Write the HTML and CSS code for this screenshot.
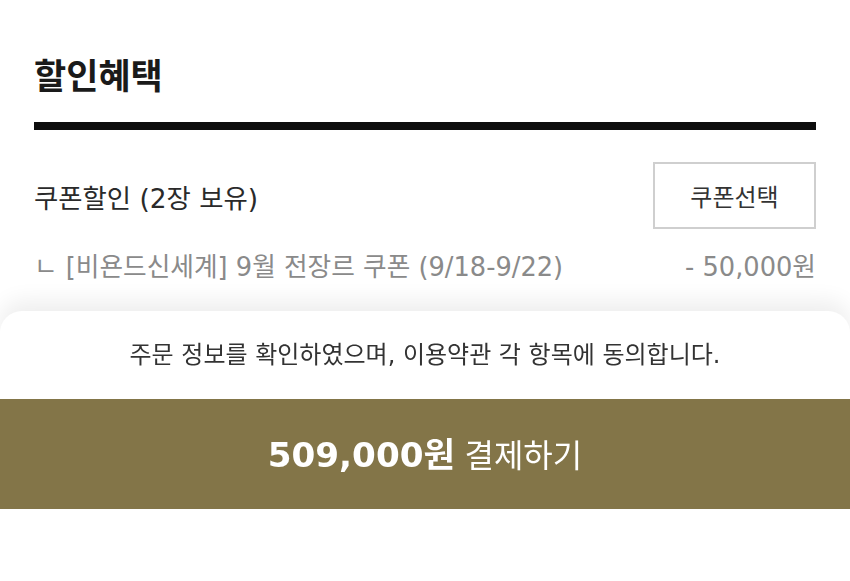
FILE: index.html
```html
<!DOCTYPE html>
<html lang="ko">
<head>
<meta charset="utf-8">
<link rel="stylesheet" href="styles.css">
</head>
<body>
<main class="page">
  <h2 class="title">할인혜택</h2>
  <div class="rule"></div>
  <div class="coupon-row">
    <span class="coupon-label">쿠폰할인 (2장 보유)</span>
    <button class="coupon-btn">쿠폰선택</button>
  </div>
  <div class="coupon-detail">
    <span>ㄴ [비욘드신세계] 9월 전장르 쿠폰 (9/18-9/22)</span>
    <span>- 50,000원</span>
  </div>
</main>
<section class="sheet">
  <p class="agree">주문 정보를 확인하였으며, 이용약관 각 항목에 동의합니다.</p>
  <button class="pay-btn"><strong class="pay-amount">509,000원</strong> <span class="pay-label">결제하기</span></button>
</section>
</body>
</html>
```
FILE: styles.css
```css
html, body {
  margin: 0;
  padding: 0;
  background: #fff;
}
body {
  font-family: "DejaVu Sans", "Noto Sans CJK KR", sans-serif;
  color: #222;
  width: 850px;
  height: 581px;
  overflow: hidden;
}
.page {
  padding: 52px 34px 0;
}
.title {
  margin: 0;
  font-family: "Noto Sans CJK KR", sans-serif;
  font-size: 35px;
  font-weight: 700;
  line-height: 44px;
  color: #1a1a1a;
}
.rule {
  margin-top: 26px;
  height: 8px;
  background: #0d0d0d;
}
.coupon-row {
  margin-top: 32px;
  display: flex;
  justify-content: space-between;
  align-items: center;
}
.coupon-label {
  font-size: 26.4px;
  color: #2a2a2a;
  padding-top: 2px;
}
.coupon-btn {
  width: 163px;
  height: 67px;
  border: 2px solid #cfcfcf;
  background: #fff;
  font-family: "Noto Sans CJK KR", sans-serif;
  font-size: 24px;
  color: #333;
  padding: 0;
}
.coupon-detail {
  margin-top: 19px;
  display: flex;
  justify-content: space-between;
  font-size: 25.7px;
  line-height: 38px;
  color: #8a8a8a;
}
.sheet {
  position: fixed;
  left: 0;
  right: 0;
  bottom: 0;
  height: 270px;
  background: #fff;
  border-radius: 22px 22px 0 0;
  box-shadow: 0 -10px 22px rgba(0, 0, 0, 0.07);
  display: flex;
  flex-direction: column;
  align-items: stretch;
}
.agree {
  margin: 27px 0 0;
  text-align: center;
  font-size: 24px;
  line-height: 34px;
  color: #333;
}
.pay-btn {
  margin-top: 27px;
  height: 110px;
  border: none;
  background: #837548;
  color: #fff;
  font-family: inherit;
  padding: 0 0 4px;
  font-size: 30px;
}
.pay-amount {
  font-size: 34.2px;
  font-weight: 700;
}
.pay-label {
  font-family: "Noto Sans CJK KR", sans-serif;
  font-size: 32px;
  font-weight: 400;
}
```
